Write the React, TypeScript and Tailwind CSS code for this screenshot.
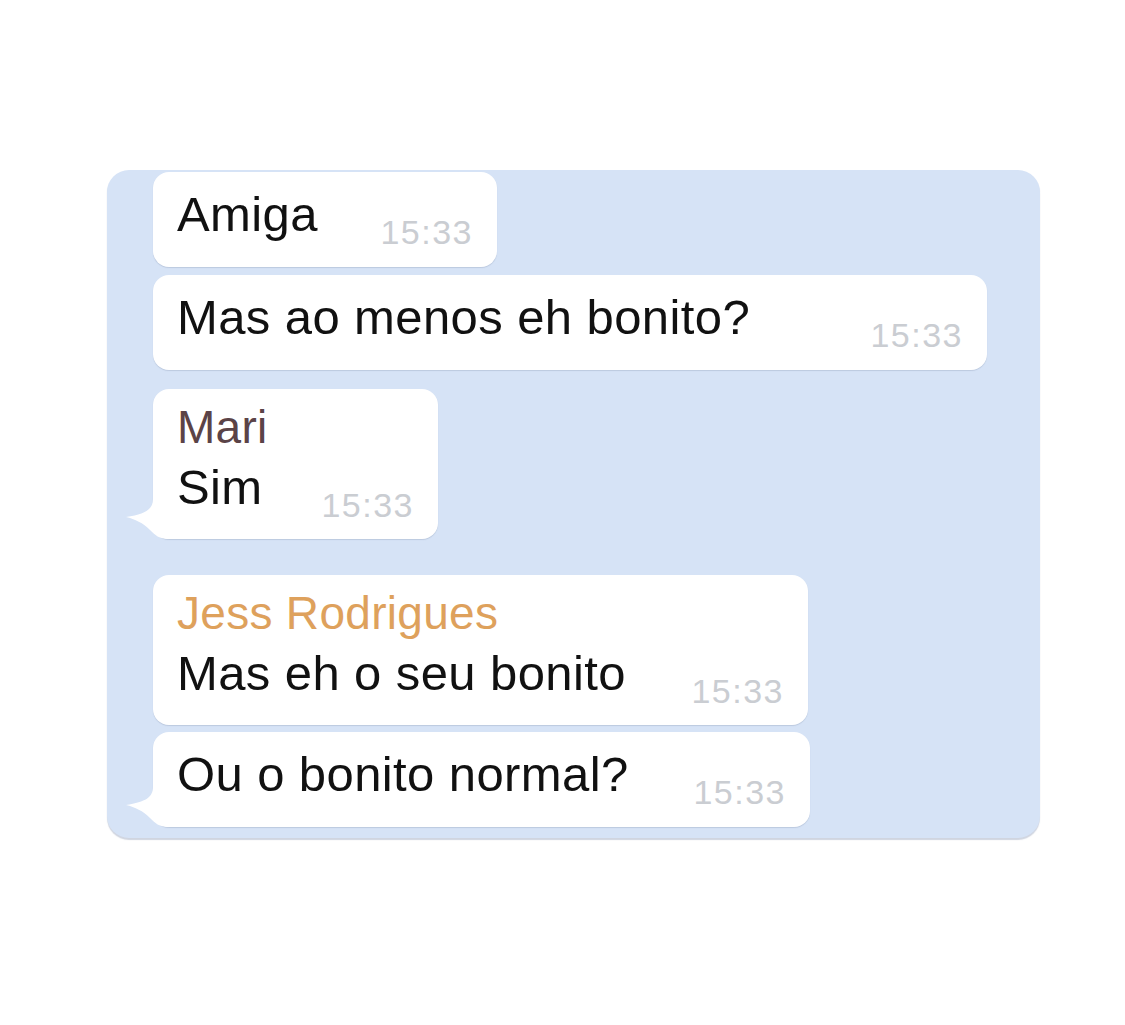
import React from "react";

type Message = {
  id: number;
  author?: string;
  authorColor?: string;
  text: string;
  time: string;
  width: string;
  tail?: boolean;
  gap: string;
};

const messages: Message[] = [
  { id: 1, text: "Amiga", time: "15:33", width: "w-[344px]", gap: "mt-0" },
  {
    id: 2,
    text: "Mas ao menos eh bonito?",
    time: "15:33",
    width: "w-[834px]",
    gap: "mt-[8px]",
  },
  {
    id: 3,
    author: "Mari",
    authorColor: "text-[#5b4347]",
    text: "Sim",
    time: "15:33",
    width: "w-[285px]",
    tail: true,
    gap: "mt-[19px]",
  },
  {
    id: 4,
    author: "Jess Rodrigues",
    authorColor: "text-[#dea15c]",
    text: "Mas eh o seu bonito",
    time: "15:33",
    width: "w-[655px]",
    gap: "mt-[36px]",
  },
  {
    id: 5,
    text: "Ou o bonito normal?",
    time: "15:33",
    width: "w-[657px]",
    tail: true,
    gap: "mt-[7px]",
  },
];

// little curled tail on the last bubble of a group
const Tail = () => (
  <svg
    className="absolute bottom-0 left-[-28px]"
    width="48"
    height="42"
    viewBox="0 0 48 42"
  >
    <path
      d="M28 2 C28 12 21 17 1 20 C10 22 18 26 25 33 C30 38 34 42 44 42 L48 42 L48 2 Z"
      fill="#ffffff"
    />
  </svg>
);

const Bubble = ({ msg }: { msg: Message }) => {
  return (
    <div
      className={`relative ${msg.gap} ${msg.width} flex items-end justify-between rounded-[16px] bg-white pl-[24px] pr-[24px] pt-[10px] ${
        msg.author ? "pb-[20px]" : "pb-[21px]"
      } shadow-[0_1px_1px_rgba(70,90,120,0.18)]`}
    >
      {msg.tail && <Tail />}
      <div className="relative">
        {msg.author && (
          <div
            className={`text-[46px] leading-[56px] tracking-[0.3px] ${msg.authorColor}`}
          >
            {msg.author}
          </div>
        )}
        <div className="text-[49px] leading-[64px] tracking-[0.4px] text-[#111111]">
          {msg.text}
        </div>
      </div>
      <span className="translate-y-[4px] text-[34px] leading-[36px] tracking-[1.5px] text-[#cacdd2]">
        {msg.time}
      </span>
    </div>
  );
};

export default function App() {
  return (
    <div className="min-h-screen bg-white pl-[107px] pt-[170px] font-['Liberation_Sans',Arial,sans-serif]">
      <div className="w-[933px] rounded-[22px] bg-[#d6e3f6] pb-[11px] pl-[46px] pt-[2px] shadow-[0_2px_1px_rgba(120,135,165,0.35)]">
        {messages.map((msg) => (
          <Bubble key={msg.id} msg={msg} />
        ))}
      </div>
    </div>
  );
}
